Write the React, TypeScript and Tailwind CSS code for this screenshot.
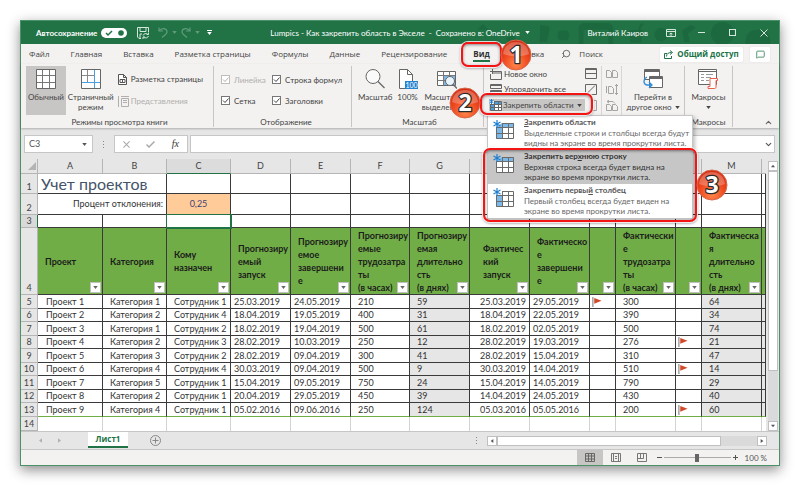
import type { ReactNode } from 'react'
import clsx from 'clsx'
import { ChevronDown, ChevronUp, MessageSquare, Search } from 'lucide-react'

const tabs = ['Файл', 'Главная', 'Вставка', 'Разметка страницы', 'Формулы', 'Данные', 'Рецензирование']

const columns = ['A', 'B', 'C', 'D', 'E', 'F', 'G', '', '', '', '', '', 'M']

const headers = [
  ['Проект'],
  ['Категория'],
  ['Кому', 'назначен'],
  ['Прогнозиру', 'емый', 'запуск'],
  ['Прогнозиру', 'емое', 'завершени', 'е'],
  ['Прогнозиру', 'емые', 'трудозатра', 'ты', '(в часах)'],
  ['Прогнозиру', 'емая', 'длительно', 'сть', '(в днях)'],
  ['Фактичес', 'кий', 'запуск'],
  ['Фактическо', 'е', 'завершени', 'е'],
  [],
  ['Фактически', 'е', 'трудозатра', 'ты', '(в часах)'],
  [],
  ['Фактическа', 'я', 'длительно', 'сть', '(в днях)'],
]

const FLAG = 'flag'

const projects = [
  ['Проект 1', 'Категория 1', 'Сотрудник 1', '25.03.2019', '24.05.2019', '210', '59', '25.03.2019', '29.05.2019', FLAG, '300', '', '64'],
  ['Проект 2', 'Категория 2', 'Сотрудник 4', '18.04.2019', '19.05.2019', '400', '31', '18.04.2019', '22.05.2019', '', '390', '', '34'],
  ['Проект 3', 'Категория 1', 'Сотрудник 2', '18.02.2019', '19.04.2019', '500', '61', '18.02.2019', '02.05.2019', '', '500', '', '74'],
  ['Проект 4', 'Категория 2', 'Сотрудник 3', '28.02.2019', '10.03.2019', '250', '12', '28.02.2019', '19.03.2019', '', '276', FLAG, '21'],
  ['Проект 5', 'Категория 3', 'Сотрудник 2', '28.02.2019', '09.04.2019', '300', '41', '28.02.2019', '15.04.2019', '', '310', '', '47'],
  ['Проект 6', 'Категория 4', 'Сотрудник 4', '30.03.2019', '09.04.2019', '500', '9', '30.03.2019', '14.04.2019', '', '510', FLAG, '14'],
  ['Проект 7', 'Категория 5', 'Сотрудник 1', '15.04.2019', '09.05.2019', '750', '24', '15.04.2019', '14.05.2019', '', '790', '', '29'],
  ['Проект 8', 'Категория 2', 'Сотрудник 1', '20.04.2019', '29.05.2019', '450', '39', '14.04.2019', '24.05.2019', '', '430', '', '40'],
  ['Проект 9', 'Категория 4', 'Сотрудник 1', '05.02.2016', '09.06.2016', '250', '124', '05.03.2016', '05.05.2016', '', '200', FLAG, '60'],
]

// left/right padding of the data cells, column by column
const cellPad = ['pl-2', 'pl-[7px]', 'pl-[7px]', 'pl-[3px]', 'pl-[3px]', 'pl-[7px]', 'pl-[7px]', 'pr-[3px] text-right', 'pl-[3px]', 'pl-[2px]', 'pl-[7px]', 'pl-[2px]', 'pl-[7px]']

type FreezeKind = 'panes' | 'row' | 'column'

const Caret = ({ className }: { className?: string }) => (
  <svg viewBox="0 0 6 4" className={clsx('h-[3px] w-[5px] shrink-0', className)} fill="currentColor">
    <path d="M0 0h6L3 4z" />
  </svg>
)

const Badge = ({ n, className }: { n: number; className: string }) => (
  <svg viewBox="0 0 32 32" className={clsx('absolute z-40 h-8 w-8', className)}>
    <defs>
      <radialGradient id={`badge${n}`} cx="0.5" cy="0.8" r="0.8">
        <stop offset="0" stopColor="#ff8a4c" />
        <stop offset="0.5" stopColor="#f04a20" />
        <stop offset="1" stopColor="#cf2a10" />
      </radialGradient>
    </defs>
    <circle cx="16" cy="16" r="15" fill={`url(#badge${n})`} stroke="#d8674a" strokeWidth="1" />
    <path d="M3 15C4 7 9 3 16 3s12 4 13 12c-7 3-19 3-26 0z" fill="#fff" opacity="0.25" />
    <text
      x="16"
      y="24"
      textAnchor="middle"
      fontFamily="Noto Sans, sans-serif"
      fontWeight="700"
      fontSize="23"
      fill="#fff"
      stroke="#2a2a2a"
      strokeWidth="2.500"
      strokeLinejoin="round"
      paintOrder="stroke"
    >
      {n}
    </text>
  </svg>
)

const Marker = ({ className }: { className: string }) => (
  <span
    className={clsx(
      'pointer-events-none absolute rounded-[7px] border-2 border-[#f41414] shadow-[0_0_0_1px_rgba(255,255,255,0.8),0_1px_3px_rgba(0,0,0,0.5),inset_0_1px_3px_rgba(0,0,0,0.45)]',
      className,
    )}
  />
)

const FreezeIcon = ({ kind, className }: { kind: FreezeKind; className: string }) => (
  <svg viewBox="0 0 22 20" className={className} fill="none">
    <path d="M3 7h18v12H3z" fill="#fff" />
    {kind === 'column' ? <path d="M9 3h12v4H9z" fill="#fff" /> : <path d="M3 7h18V3H9z" fill="#7db9e8" />}
    {kind !== 'row' && <path d="M3 7h6v12H3z" fill="#7db9e8" />}
    <path d="M9 3.500h11.500v15h-17V8M3 7.500h18M3 13.500h18M9.500 3v16M15.500 3v16" stroke="#6a6a6a" />
    <path d="M4 0v8M.500 2l7 4M7.500 2l-7 4" stroke="#1e7fd0" strokeWidth="1.200" />
  </svg>
)

const FreezeSmallIcon = () => (
  <svg viewBox="0 0 13 12" className="h-3 w-[13px]" fill="none">
    <path d="M1 2h11v9H1z" fill="#fff" />
    <path d="M5 2h7v3H5zM1 5h4v6H1z" fill="#4a9fe0" />
    <path d="M5 2.500h7.500v9H1.500V6M1 5.500h11M1 8.500h11M5.500 2v9M9.500 2v9" stroke="#666" />
    <path d="M2.500 0v5M.500 1l4 3M4.500 1l-4 3" stroke="#1e7fd0" />
  </svg>
)

const GridIcon = () => (
  <svg viewBox="0 0 20 20" className="h-5 w-5" fill="none">
    <path d="M.500.500h19v19H.500z" fill="#fff" stroke="#666" />
    <path d="M1 6.500h18M1 13.500h18M6.500 1v18M13.500 1v18" stroke="#777" />
  </svg>
)

const PageBreakIcon = () => (
  <svg viewBox="0 0 20 20" className="h-5 w-5" fill="none">
    <path d="M.500.500h19v19H.500z" fill="#fff" stroke="#666" />
    <path d="M1 6.500h12M6.500 1v12" stroke="#888" />
    <path d="M13.500 1v18M1 13.500h18" stroke="#4a9fe0" />
  </svg>
)

const ZoomIcon = () => (
  <svg viewBox="0 0 20 20" className="h-5 w-5" fill="none" stroke="#666">
    <circle cx="8" cy="7.500" r="7" fill="#fafafa" />
    <path d="M13 12.500l6.500 6.500" strokeWidth="1.300" />
  </svg>
)

const Zoom100Icon = () => (
  <svg viewBox="0 0 20 20" className="h-5 w-5" fill="none">
    <path d="M1.500.500h8l5 5v14h-13z" fill="#fff" stroke="#666" />
    <path d="M9.500.500v5h5" stroke="#666" />
    <path d="M7 12h13v8H7z" fill="#2583d0" />
    <text x="13.500" y="18.500" textAnchor="middle" fontSize="7" fontFamily="Lato, sans-serif" fill="#fff">
      100
    </text>
  </svg>
)

const ZoomSelectionIcon = () => (
  <svg viewBox="0 0 20 20" className="h-5 w-5" fill="none">
    <path d="M.500 2.500h18v14H.500z" fill="#fff" stroke="#666" />
    <path d="M7 7h11v9H7z" fill="#7db9e8" />
    <path d="M.500 6.500h18M.500 11.500h18M6.500 2.500v14M12.500 2.500v14" stroke="#777" />
    <circle cx="13" cy="12" r="4.500" fill="#e8f3fb" stroke="#666" />
    <path d="M16 15.500l4 4" stroke="#666" strokeWidth="1.300" />
  </svg>
)

const SwitchIcon = () => (
  <svg viewBox="0 0 20 20" className="h-5 w-5" fill="none" stroke="#666">
    <path d="M1.500.500h15v10h-15z" fill="#fff" />
    <path d="M1.500 2h15" strokeWidth="2" />
    <path d="M6.500 7.500h13v11h-13z" fill="#fff" />
    <path d="M6.500 9h13" strokeWidth="2" />
    <path d="M4 8C0 10 0 15 4 16h4M6 13l3 3-3 3" stroke="#2f8fdb" strokeWidth="1.300" fill="none" />
  </svg>
)

const MacroIcon = () => (
  <svg viewBox="0 0 20 20" className="h-5 w-5" fill="none" stroke="#666">
    <path d="M.500.500h18v15H.500z" fill="#fff" />
    <path d="M.500 2.500h18" />
    <path d="M3 5.500h3M8 5.500h7M3 8.500h3M8 8.500h5M3 11.500h3M8 11.500h3" stroke="#999" />
    <path d="M12 9.500h7.500v2H18v6.500c0 1-.500 1.500-1.500 1.500H10v-2h2z" fill="#fff" stroke="#e8604f" />
  </svg>
)

const BigButton = ({ icon, lines, active, caret }: { icon: ReactNode; lines: string[]; active?: boolean; caret?: boolean }) => (
  <button
    type="button"
    className={clsx('flex h-[49px] flex-col items-center px-[2px] pt-[3px] leading-[10px] whitespace-nowrap', active && 'bg-[#c8c6c4]')}
  >
    {icon}
    <span className="mt-[3px]">{lines[0]}</span>
    <span className="flex h-[10px] items-center gap-[3px]">
      {lines[1]}
      {caret && <Caret />}
    </span>
  </button>
)

const Check = ({ id, label, disabled }: { id: string; label: string; disabled?: boolean }) => (
  <label htmlFor={id} className={clsx('flex h-[11px] items-center gap-1 whitespace-nowrap', disabled && 'text-[#b1afad]')}>
    <span className="relative flex h-[9px] w-[9px]">
      <input
        id={id}
        type="checkbox"
        defaultChecked
        disabled={disabled}
        className="h-[9px] w-[9px] appearance-none border border-[#777] bg-white disabled:border-[#c0bebc]"
      />
      <svg viewBox="0 0 9 9" className="pointer-events-none absolute inset-0" fill="none" stroke="currentColor">
        <path d="M2 4.500l2 2 3.500-4" />
      </svg>
    </span>
    {label}
  </label>
)

const Group = ({ label, className, children }: { label?: string; className: string; children: ReactNode }) => (
  <section className={clsx('flex flex-col justify-between border-r border-[#c8c6c4]', className)}>
    <div className="flex">{children}</div>
    {label && <h2 className="text-center leading-[9px]">{label}</h2>}
  </section>
)

const TitleBar = () => (
  <header className="relative grid h-[23px] grid-cols-[1fr_auto_1fr] items-center bg-[#217346] text-[8px] text-white">
    <svg viewBox="0 0 320 24" className="absolute top-0 right-0 h-[23px] w-80" fill="#1d693f">
      <path d="M12 9l6-6 6 6zM42 18l8-4 4 6-9 3zM78 4l10 2-3 16h-8z" />
      <path d="M118 24V8c0-4 3-6 7-6h22c4 0 7 2 7 6v16h-5V9h-26v15z" />
      <rect x="96" y="10" width="12" height="10" rx="4" />
      <path d="M170 10l10-1 2-6 4-1v2l-2 1-2 4h3l-2 14h-11zM226 10l9-6 5 3-8 6 2 9h-6z" />
      <circle cx="204" cy="14" r="7" />
      <circle cx="268" cy="13" r="12" />
      <path d="M292 24c0-12 5-15 14-15s12 6 12 15z" />
    </svg>
    <div className="relative flex items-center pl-[15px]">
      <label htmlFor="autosave" className="mr-1 font-bold">
        Автосохранение
      </label>
      <span className="relative mr-[10px] flex h-[10px] w-[26px]">
        <input id="autosave" type="checkbox" role="switch" defaultChecked className="h-[10px] w-[26px] appearance-none rounded-full bg-white" />
        <svg viewBox="0 0 26 10" className="pointer-events-none absolute inset-0" fill="none">
          <path d="M5 5l2 2 4-4" stroke="#217346" strokeWidth="1.500" />
          <circle cx="20" cy="5" r="2.800" fill="#217346" />
        </svg>
      </span>
      <button type="button" aria-label="Сохранить" className="mr-[9px]">
        <svg viewBox="0 0 12 12" className="h-3 w-3" fill="none" stroke="#d5e6dc">
          <path d="M4 11.500H2L.500 10V.500h11V5M3 .500v4h6v-4M3 11V7h2" />
          <path d="M6 8.500a3 3 0 0 1 5-1M11.500 5.500v2h-2M11.500 9a3 3 0 0 1-5 1M6 12v-2h2" />
        </svg>
      </button>
      <button type="button" aria-label="Отменить" disabled className="flex items-center gap-1 text-[#5f9b79]">
        <svg viewBox="0 0 10 11" className="h-[11px] w-[10px]" fill="none" stroke="currentColor" strokeWidth="1.200">
          <path d="M1 .500V4h4M1 4C4 0 9 1.500 9 5c0 2-2 3-5 5.500" />
        </svg>
        <Caret />
      </button>
      <button type="button" aria-label="Вернуть" disabled className="ml-1 flex items-center gap-1 text-[#5f9b79]">
        <svg viewBox="0 0 10 11" className="h-[11px] w-[10px]" fill="none" stroke="currentColor" strokeWidth="1.200">
          <path d="M9 .500V4H5M9 4C6 0 1 1.500 1 5c0 2 2 3 5 5.500" />
        </svg>
        <Caret />
      </button>
      <button type="button" aria-label="Настройка панели" className="ml-[7px] flex flex-col items-center gap-px">
        <span className="h-px w-[5px] bg-white" />
        <Caret />
      </button>
    </div>
    <h1 className="relative flex items-center gap-[5px] whitespace-pre">
      Lumpics - Как закрепить область в Экселе  -  Сохранено в: OneDrive
      <Caret />
    </h1>
    <div className="relative flex items-center justify-end">
      <span className="mr-[7px]">Виталий Каиров</span>
      <button type="button" aria-label="Параметры ленты" className="flex w-[31px] justify-center">
        <svg viewBox="0 0 10 8" className="h-2 w-[10px]" fill="none" stroke="#d5e6dc">
          <path d="M.500.500h9v7h-9zM1 2.500h8M5 7V4M3.500 5.200L5 4l1.500 1.200" />
        </svg>
      </button>
      <button type="button" aria-label="Свернуть" className="flex w-[31px] justify-center">
        <span className="h-px w-[7px] bg-[#d5e6dc]" />
      </button>
      <button type="button" aria-label="Развернуть" className="flex w-[31px] justify-center">
        <span className="h-[7px] w-[7px] border border-[#d5e6dc]" />
      </button>
      <button type="button" aria-label="Закрыть" className="flex w-[31px] justify-center">
        <svg viewBox="0 0 8 8" className="h-2 w-2" stroke="#d5e6dc">
          <path d="M.500.500l7 7M7.500.500l-7 7" />
        </svg>
      </button>
    </div>
  </header>
)

const TabBar = () => (
  <nav className="flex h-5 items-center gap-[22px] bg-[#f3f2f1] pr-[9px] pl-2 font-['Open_Sans',sans-serif] text-[8px] whitespace-nowrap text-[#444]">
    <div className="flex gap-[21px]">
      {tabs.map((tab) => (
        <button key={tab} type="button">
          {tab}
        </button>
      ))}
    </div>
    <div className="relative ml-1">
      <Marker className="-inset-x-3 -top-[5px] -bottom-[5px] z-30" />
      <button type="button" className="border-b-2 border-[#217346] leading-[13px] font-bold text-[#333]">
        Вид
      </button>
      <Badge n={1} className="-top-2 left-[27px]" />
    </div>
    <button type="button">Справка</button>
    <label className="-ml-[5px] flex items-center gap-2">
      <Search className="h-[10px] w-[10px] -scale-x-100 text-[#555]" strokeWidth={2} />
      <input placeholder="Поиск" aria-label="Поиск" className="w-10 bg-transparent outline-none placeholder:text-[#444]" />
    </label>
    <div className="ml-auto flex gap-[7px] text-[#217346]">
      <button type="button" className="flex h-[15px] w-[83px] items-center justify-center gap-1 rounded-[1px] bg-white font-bold shadow-[0_0_1px_#bbb]">
        <svg viewBox="0 0 9 9" className="h-[9px] w-[9px]" fill="none" stroke="currentColor">
          <path d="M3 3.500H.500v5h7V6M2.500 6.500c0-3 2-4 5-4M6 .500l2.500 2L6 4.500" />
        </svg>
        Общий доступ
      </button>
      <button type="button" aria-label="Примечания" className="flex h-[15px] w-5 items-center justify-center rounded-[1px] bg-white shadow-[0_0_1px_#bbb]">
        <MessageSquare className="h-[9px] w-[9px]" />
      </button>
    </div>
  </nav>
)

const FreezeItem = ({ kind, title, lines, active }: { kind: FreezeKind; title: ReactNode; lines: string[]; active?: boolean }) => (
  <button type="button" role="menuitem" className={clsx('flex h-[34px] w-full gap-[9px] pl-[5px] text-left', active && 'bg-[#c6c6c6]')}>
    <FreezeIcon kind={kind} className="mt-1 h-5 w-[22px] shrink-0" />
    <span className={clsx('leading-[10px] whitespace-nowrap', active ? 'text-[#333]' : 'text-[#666]')}>
      <b className={clsx('block leading-[12px]', active ? 'text-[#333]' : 'text-[#555]')}>{title}</b>
      {lines[0]}
      <br />
      {lines[1]}
    </span>
  </button>
)

const FreezeMenu = () => (
  <div role="menu" className="absolute top-4 -left-[2px] z-20 w-[206px] border border-[#c6c6c6] bg-white shadow-[2px_2px_4px_rgba(0,0,0,0.25)]">
    <FreezeItem
      kind="panes"
      title={<><u>З</u>акрепить области</>}
      lines={['Выделенные строки и столбцы всегда будут', 'видны на экране во время прокрутки листа.']}
    />
    <FreezeItem
      kind="row"
      active
      title={<>Закрепить вер<u>х</u>нюю строку</>}
      lines={['Верхняя строка всегда будет видна на', 'экране во время прокрутки листа.']}
    />
    <FreezeItem
      kind="column"
      title={<>Закрепить первы<u>й</u> столбец</>}
      lines={['Первый столбец всегда будет виден на', 'экране во время прокрутки листа.']}
    />
    <Marker className="-inset-x-[5px] top-8 -bottom-1" />
    <Badge n={3} className="top-[53px] -right-9" />
  </div>
)

const WindowGlyph = ({ d, muted }: { d: string; muted?: boolean }) => (
  <svg viewBox="0 0 12 11" className={clsx('h-[11px] w-3', muted ? 'text-[#a6a4a2]' : 'text-[#666]')} fill="none" stroke="currentColor">
    <path d={d} />
  </svg>
)

const Ribbon = () => (
  <div className="relative flex h-16 bg-[#f3f2f1] pt-[2px] pb-px text-[8px] text-[#444] shadow-[0_1px_2px_rgba(0,0,0,0.25)]">
    <Group label="Режимы просмотра книги" className="w-[193px] pl-[5px]">
      <BigButton active icon={<GridIcon />} lines={['Обычный']} />
      <BigButton icon={<PageBreakIcon />} lines={['Страничный', 'режим']} />
      <div className="ml-[2px] flex flex-col gap-[10px] pt-[7px] whitespace-nowrap">
        <button type="button" className="flex h-3 items-center gap-1">
          <svg viewBox="0 0 9 11" className="h-[11px] w-[9px]" fill="none" stroke="#555">
            <path d="M.500.500h5l3 3v7h-8zM2 5.500h5v3H2zM4.500 5v4M5.500.500v3h3" fill="#fff" />
          </svg>
          Разметка страницы
        </button>
        <button type="button" disabled className="flex h-3 items-center gap-[2px] text-[#b1afad]">
          <svg viewBox="0 0 11 11" className="h-[11px] w-[11px]" fill="none" stroke="currentColor">
            <path d="M.500 0v11M3 .500h8M3.500 2.500h7v8h-7zM5 4.500h4M5 6.500h4" />
          </svg>
          Представления
        </button>
      </div>
    </Group>

    <Group label="Отображение" className="w-[138px] pl-[7px]">
      <div className="grid grid-cols-[51px_auto] gap-y-[10px] pt-2">
        <Check id="ruler" label="Линейка" disabled />
        <Check id="formula" label="Строка формул" />
        <Check id="gridlines" label="Сетка" />
        <Check id="headings" label="Заголовки" />
      </div>
    </Group>

    <Group label="Масштаб" className="w-[132px] pl-[4px]">
      <BigButton icon={<ZoomIcon />} lines={['Масштаб']} />
      <div className="ml-px flex">
        <BigButton icon={<Zoom100Icon />} lines={['100%']} />
      </div>
      <BigButton icon={<ZoomSelectionIcon />} lines={['Масштаб по', 'выделенному']} />
    </Group>

    <Group className="w-[201px] pl-[5px]">
      <div className="flex w-[95px] flex-col pt-[3px] whitespace-nowrap">
        <button type="button" className="flex h-[15px] items-start gap-[2px] pl-px">
          <WindowGlyph d="M2 2.500h9.500v8H.500V5M2.500 0v5M0 2.500h5M3 4h8" />
          Новое окно
        </button>
        <button type="button" className="flex h-[15px] items-start gap-[2px] pl-px">
          <WindowGlyph d="M.500.500h11v4H.500zM.500 6.500h11v4H.500zM1 1.500h10M1 7.500h10" />
          Упорядочить все
        </button>
        <div className="relative h-[13px]">
          <Marker className="-top-[6px] -right-[9px] -bottom-[3px] -left-[9px] z-30 bg-[#f3f2f1]" />
          <button
            type="button"
            aria-haspopup="menu"
            aria-expanded
            className="relative z-30 flex h-3 w-[96px] items-center gap-px bg-[#c8c6c4]"
          >
            <FreezeSmallIcon />
            Закрепить области
            <Caret className="ml-[2px]" />
          </button>
          <FreezeMenu />
          <Badge n={2} className="-top-3 -left-10" />
        </div>
      </div>
      <div className="flex w-[18px] flex-col items-end gap-[5px] border-r border-[#d8d6d4] pt-[2px] pr-1">
        <WindowGlyph d="M.500.500h11v10H.500zM0 5.500h12M0 1.500h12" />
        <WindowGlyph d="M.500.500h11v10H.500zM2 9.500l8-8" />
        <WindowGlyph muted d="M.500.500h11v10H.500zM6.500 0v11" />
      </div>
      <div className="flex w-5 flex-col items-center gap-[5px] border-r border-[#d8d6d4] pt-[2px]">
        <WindowGlyph muted d="M.500 9.500v-7h3l2 2v5zM6.500 9.500v-7h3l2 2v5z" />
        <WindowGlyph muted d="M.500 2v7M2.500 9.500v-7h3l2 2v5zM10.500 0v11M9 2l1.500-1.500L12 2M9 9l1.500 1.500L12 9" />
        <WindowGlyph muted d="M.500 10.500v-6h3l2 2v4zM6.500 10.500v-6h3l2 2v4zM1 1.500h6l2 2M3 0L1 1.500 3 3" />
      </div>
      <div className="flex flex-1 justify-center">
        <BigButton icon={<SwitchIcon />} lines={['Перейти в', 'другое окно']} caret />
      </div>
    </Group>

    <Group label="Макросы" className="w-12">
      <div className="flex flex-1 justify-center">
        <BigButton icon={<MacroIcon />} lines={['Макросы', '']} caret />
      </div>
    </Group>
    <button type="button" aria-label="Свернуть ленту" className="mt-auto mr-[6px] ml-auto">
      <ChevronUp className="h-[9px] w-[9px] text-[#666]" strokeWidth={3} />
    </button>
  </div>
)

const FormulaBar = () => (
  <div className="flex h-[31px] items-start gap-[2px] bg-[#e6e6e6] pt-[7px] pr-1 pl-[3px] text-[8px] text-[#555]">
    <label className="flex h-[18px] w-[69px] items-center border border-[#c6c6c6] bg-white pr-[5px] pl-1">
      <input aria-label="Имя ячейки" defaultValue="C3" className="min-w-0 flex-1 bg-transparent text-[9px] outline-none" />
      <Caret />
    </label>
    <div className="flex h-[18px] w-[17px] items-center justify-center">
      <Dots />
    </div>
    <div className="flex h-[18px] w-[74px] items-center justify-around border border-[#c6c6c6] bg-white">
      <button type="button" aria-label="Отмена" className="text-[#aaa]">
        <svg viewBox="0 0 8 8" className="h-[7px] w-[7px]" stroke="currentColor" strokeWidth="1.200">
          <path d="M.500.500l7 7M7.500.500l-7 7" />
        </svg>
      </button>
      <button type="button" aria-label="Ввод" className="text-[#aaa]">
        <svg viewBox="0 0 9 7" className="h-[7px] w-[9px]" fill="none" stroke="currentColor" strokeWidth="1.500">
          <path d="M.500 3.500L3 6 8.500.500" />
        </svg>
      </button>
      <button type="button" className="font-['Liberation_Serif',serif] text-[10px] leading-[10px] text-[#333] italic">
        fx
      </button>
    </div>
    <label className="flex h-[18px] flex-1 items-center border border-[#c6c6c6] bg-white pr-px">
      <input aria-label="Строка формул" className="min-w-0 flex-1 bg-transparent outline-none" />
      <ChevronDown className="h-[9px] w-[9px]" strokeWidth={3} />
    </label>
  </div>
)

const Dots = () => (
  <span className="flex flex-col gap-[2px]">
    <i className="h-px w-px bg-[#888]" />
    <i className="h-px w-px bg-[#888]" />
    <i className="h-px w-px bg-[#888]" />
  </span>
)

const Flag = () => (
  <svg viewBox="0 0 10 11" className="h-[10px] w-[10px]">
    <path d="M.500 0v11" stroke="#666" />
    <path d="M2 1l8 3-8 3.500z" fill="#d2492a" />
  </svg>
)

const RowHead = ({ n, selected }: { n: number; selected?: boolean }) => (
  <th
    scope="row"
    className={clsx(
      'border-r border-b border-[#b5b5b5] p-0 text-center align-bottom font-normal text-[#444]',
      selected ? 'border-r-[#217346] bg-[#d9d9d9]' : 'bg-[#e6e6e6]',
    )}
  >
    {n}
  </th>
)

const cell = 'border-r border-b border-[#3a3a3a] p-0 whitespace-nowrap'

const Sheet = () => (
  <table className="w-full table-fixed border-separate border-spacing-0 bg-white text-[9px] leading-[12px] text-[#333]">
    <colgroup>
      <col className="w-[17px]" />
      <col className="w-[65px]" />
      <col className="w-16" />
      <col className="w-16" />
      <col className="w-[60px]" />
      <col className="w-[60px]" />
      <col className="w-[59px]" />
      <col className="w-[60px]" />
      <col className="w-[60px]" />
      <col className="w-[60px]" />
      <col className="w-[26px]" />
      <col className="w-[60px]" />
      <col className="w-[26px]" />
      <col className="w-[60px]" />
      <col />
    </colgroup>
    <thead>
      <tr className="h-[15px] bg-[#e6e6e6] text-[#444]">
        <td className="border-r border-b border-[#b5b5b5] p-0">
          <svg viewBox="0 0 9 9" className="ml-auto h-[9px] w-[9px]">
            <path d="M8 0v8H0z" fill="#b3b3b3" />
          </svg>
        </td>
        {columns.map((c, i) => (
          <th
            key={i}
            scope="col"
            className={clsx('border-r border-b border-[#b5b5b5] p-0 font-normal', i === 2 && 'border-b-[#217346] bg-[#dcdcdc]')}
          >
            {c}
          </th>
        ))}
        <td className="border-b border-[#b5b5b5]" />
      </tr>
    </thead>
    <tbody>
      <tr className="h-5">
        <RowHead n={1} />
        <td colSpan={2} className={clsx(cell, 'pl-[3px] text-base leading-[19px] text-[#44546a]')}>
          Учет проектов
        </td>
        {columns.slice(2).map((_, i) => <td key={i} className={cell} />)}
        <td className={cell} />
      </tr>
      <tr className="h-[21px]">
        <RowHead n={2} />
        <td colSpan={2} className={clsx(cell, 'pr-[3px] text-right')}>
          Процент отклонения:
        </td>
        <td className={clsx(cell, 'bg-[#ffcc99] text-center text-[#3f3f76]')}>0,25</td>
        {columns.slice(3).map((_, i) => <td key={i} className={cell} />)}
        <td className={cell} />
      </tr>
      <tr className="h-[13px]">
        <RowHead n={3} selected />
        {columns.map((_, i) => (
          <td key={i} className={clsx(cell, i === 2 && 'relative z-10 border-[#217346] outline-1 outline-[#217346]')} />
        ))}
        <td className={cell} />
      </tr>
      <tr className="h-[67px] bg-[#70ad47]">
        <RowHead n={4} />
        {headers.map((lines, i) => (
          <th key={i} className={clsx(cell, 'relative text-left leading-[13px] text-[#1c1c1c]', i === 7 ? 'pl-[13px]' : 'pl-[7px]')}>
            {lines.map((line) => <div key={line + i}>{line}</div>)}
            <button
              type="button"
              aria-label="Фильтр"
              className="absolute right-px bottom-px flex h-[11px] w-[11px] items-center justify-center border border-[#c0c0c0] bg-white text-[#666]"
            >
              <Caret />
            </button>
          </th>
        ))}
        <td className={cell} />
      </tr>
      {projects.map((row, r) => (
        <tr key={r} className={r % 2 ? 'h-[13px]' : 'h-[14px]'}>
          <RowHead n={r + 5} />
          {row.map((value, i) => (
            <td
              key={i}
              className={clsx(cell, cellPad[i], (i === 6 || i === 12) && 'bg-[#e6e6e6]', r === projects.length - 1 && 'border-b-[#70ad47]')}
            >
              {value === FLAG ? <Flag /> : value}
            </td>
          ))}
          <td className={clsx(cell, 'bg-[#e6e6e6]', r === projects.length - 1 && 'border-b-[#70ad47]')} />
        </tr>
      ))}
      <tr className="h-[14px]">
        <RowHead n={14} />
        {columns.map((_, i) => <td key={i} className="border-r border-[#d4d4d4]" />)}
        <td />
      </tr>
    </tbody>
  </table>
)

const ScrollButton = ({ label, d }: { label: string; d: string }) => (
  <button type="button" aria-label={label} className="flex h-[10px] w-[10px] shrink-0 items-center justify-center border border-[#c0c0c0] bg-white">
    <svg viewBox="0 0 6 6" className="h-1 w-1" fill="#555">
      <path d={d} />
    </svg>
  </button>
)

const VerticalScroll = () => (
  <div className="flex w-[13px] shrink-0 flex-col items-center bg-[#e6e6e6] pt-[2px]">
    <ScrollButton label="Вверх" d="M0 5h6L3 1z" />
    <div className="flex w-[10px] flex-1 flex-col bg-[#dadada]">
      <div className="h-4/5 border border-[#c0c0c0] bg-white" />
    </div>
    <ScrollButton label="Вниз" d="M0 1h6L3 5z" />
  </div>
)

const SheetTabs = () => (
  <div className="flex h-[19px] items-center border-y border-[#c6c6c6] bg-[#e6e6e6] pr-3 text-[8px]">
    <button type="button" aria-label="Предыдущий лист" className="ml-[18px]">
      <svg viewBox="0 0 4 6" className="h-[5px] w-[3px]" fill="#b0b0b0"><path d="M4 0v6L0 3z" /></svg>
    </button>
    <button type="button" aria-label="Следующий лист" className="ml-4">
      <svg viewBox="0 0 4 6" className="h-[5px] w-[3px]" fill="#b0b0b0"><path d="M0 0v6l4-3z" /></svg>
    </button>
    <button type="button" className="ml-[27px] h-4 w-10 self-start border-b-2 border-[#217346] bg-white font-['Open_Sans',sans-serif] font-bold text-[#217346]">
      Лист1
    </button>
    <button type="button" aria-label="Новый лист" className="ml-[22px]">
      <svg viewBox="0 0 11 11" className="h-[11px] w-[11px]" fill="none" stroke="#888">
        <circle cx="5.500" cy="5.500" r="5" />
        <path d="M5.500 2.500v6M2.500 5.500h6" />
      </svg>
    </button>
    <div className="ml-auto flex w-[39%] items-center">
      <Dots />
      <div className="w-[10px]" />
      <ScrollButton label="Влево" d="M5 0v6L1 3z" />
      <div className="flex h-[10px] flex-1 bg-[#dadada]">
        <div className="w-[86%] border border-[#c0c0c0] bg-white" />
      </div>
      <ScrollButton label="Вправо" d="M1 0v6l4-3z" />
    </div>
  </div>
)

const StatusBar = () => (
  <footer className="flex h-[15px] items-center justify-end bg-[#f3f2f1] pr-3 text-[8px] text-[#555]">
    <button type="button" aria-label="Обычный" className="flex h-full w-[26px] items-center justify-center bg-[#c8c6c4]">
      <svg viewBox="0 0 10 9" className="h-[9px] w-[10px]" fill="none" stroke="#666">
        <path d="M.500.500h9v8h-9zM0 3h10M0 6h10M3.500 0v9M6.500 0v9" />
      </svg>
    </button>
    <button type="button" aria-label="Разметка страницы" className="flex w-[26px] justify-center">
      <svg viewBox="0 0 10 9" className="h-[9px] w-[10px]" fill="none" stroke="#777">
        <path d="M.500.500h9v8h-9zM2.500 1v7M7.500 1v7M4 3.500h2M4 5.500h2" />
      </svg>
    </button>
    <button type="button" aria-label="Страничный" className="flex w-[26px] justify-center">
      <svg viewBox="0 0 10 9" className="h-[9px] w-[10px]" fill="none" stroke="#777">
        <path d="M.500.500h9v8h-9zM3.500.500v5M6.500.500v5H.500" />
      </svg>
    </button>
    <button type="button" aria-label="Уменьшить" className="ml-[2px] h-px w-[5px] bg-[#555]" />
    <input
      type="range"
      aria-label="Масштаб"
      min={0}
      max={100}
      defaultValue={50}
      className="mx-[2px] h-[9px] w-[67px] appearance-none bg-[linear-gradient(#aaa,#aaa)] bg-[length:100%_1px] bg-center bg-no-repeat [&::-webkit-slider-thumb]:h-2 [&::-webkit-slider-thumb]:w-1 [&::-webkit-slider-thumb]:appearance-none [&::-webkit-slider-thumb]:bg-[#666]"
    />
    <button type="button" aria-label="Увеличить">
      <svg viewBox="0 0 5 5" className="h-[5px] w-[5px]" stroke="#555"><path d="M2.500 0v5M0 2.500h5" /></svg>
    </button>
    <span className="ml-[7px] whitespace-nowrap">100 %</span>
  </footer>
)

export default function App() {
  return (
    <div className="bg-white p-5">
      <main className="border border-[#4a9168] bg-[#e6e6e6] font-['Lato',sans-serif] leading-[10px] shadow-[0_4px_12px_rgba(0,0,0,0.45)]">
        <TitleBar />
        <TabBar />
        <Ribbon />
        <FormulaBar />
        <div className="flex">
          <div className="min-w-0 flex-1 overflow-hidden">
            <Sheet />
          </div>
          <VerticalScroll />
        </div>
        <SheetTabs />
        <StatusBar />
      </main>
    </div>
  )
}
